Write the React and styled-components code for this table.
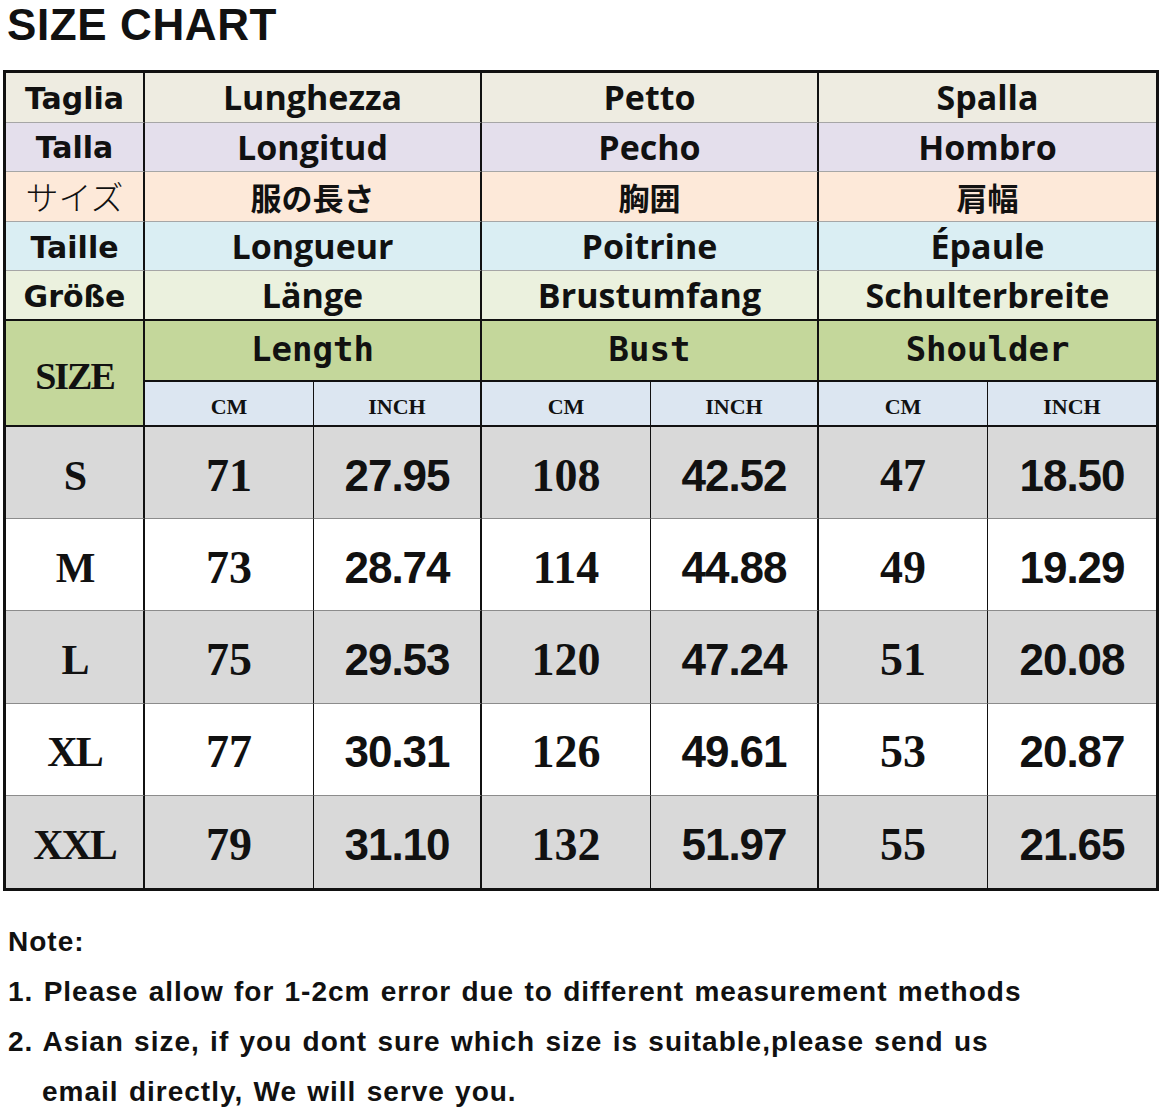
import React from 'react';
import styled, { createGlobalStyle } from 'styled-components';

const GlobalStyle = createGlobalStyle`
  * {
    box-sizing: border-box;
  }

  body {
    margin: 0;
    background: #ffffff;
    color: #111111;
    font-family: "Liberation Sans", Arial, sans-serif;
  }
`;

const Page = styled.div`
  width: 1163px;
  padding-bottom: 6px;
`;

const Title = styled.h1`
  margin: 0;
  padding-left: 7px;
  font-family: "Liberation Sans", Arial, sans-serif;
  font-size: 44px;
  line-height: 50px;
  letter-spacing: 0.6px;
  font-weight: 700;
  color: #111111;
`;

const ChartFrame = styled.div`
  margin: 20px 0 0 3px;
  width: 1156px;
  border: 3px solid #111111;
`;

const Table = styled.table`
  width: 100%;
  border-collapse: separate;
  border-spacing: 0;
  table-layout: fixed;
`;

const Cell = styled.td`
  padding: 0;
  text-align: center;
  vertical-align: middle;
  color: #111111;
  background: ${(p) => p.$bg || 'transparent'};
  border-right: ${(p) => (p.$last ? 'none' : p.$thin ? '1px solid #111' : '2px solid #111')};
  border-bottom: ${(p) => p.$bottom || 'none'};
  white-space: nowrap;
`;

const LangCell = styled(Cell)`
  height: 49.6px;
  font-family: ${(p) =>
    p.$first ? '"DejaVu Sans", sans-serif' : '"Open Sans", sans-serif'};
  font-size: ${(p) => (p.$first ? '30px' : '34px')};
  font-weight: 700;
  line-height: 1;
  padding-top: ${(p) => (p.$first ? '3px' : '0')};
`;

const JapaneseCell = styled(LangCell)`
  font-family: "Noto Sans CJK JP", sans-serif;
  font-size: ${(p) => (p.$first ? '33px' : '31px')};
  font-weight: ${(p) => (p.$first ? 300 : 700)};
  padding-top: 0;
`;

const SizeHead = styled(Cell)`
  font-family: "Liberation Serif", "Times New Roman", serif;
  font-size: 38px;
  font-weight: 700;
  letter-spacing: -2px;
  padding-top: 6px;
`;

const GroupHead = styled(Cell)`
  height: 61px;
  font-family: "DejaVu Sans Mono", "Liberation Mono", monospace;
  font-size: 34px;
  font-weight: 700;
  padding-bottom: 2px;
`;

const UnitHead = styled(Cell)`
  height: 45px;
  font-family: "Liberation Serif", "Times New Roman", serif;
  font-size: 22px;
  font-weight: 700;
  padding-top: 8px;
`;

const DataCell = styled(Cell)`
  height: 92.2px;
  font-weight: 700;
  line-height: 1;
  padding-top: 6px;
  font-family: ${(p) =>
    p.$kind === 'inch'
      ? '"Liberation Sans", Arial, sans-serif'
      : '"Liberation Serif", "Times New Roman", serif'};
  font-size: ${(p) => (p.$kind === 'inch' ? '44px' : p.$kind === 'size' ? '42px' : '46px')};
  letter-spacing: ${(p) => (p.$kind === 'inch' ? '-1px' : p.$kind === 'size' ? '-2px' : '0')};
`;

const Notes = styled.div`
  margin-top: 26px;
  padding-left: 8px;
  font-family: "Liberation Sans", Arial, sans-serif;
  font-size: 28px;
  font-weight: 700;
  letter-spacing: 1px;
  word-spacing: 1.5px;
  line-height: 50px;
  color: #111111;
`;

const NoteLine = styled.div`
  padding-left: ${(p) => (p.$indent ? '34px' : '0')};
  white-space: nowrap;
`;

const LANG_ROWS = [
  { bg: '#eeece1', label: 'Taglia', cols: ['Lunghezza', 'Petto', 'Spalla'] },
  { bg: '#e4dfec', label: 'Talla', cols: ['Longitud', 'Pecho', 'Hombro'] },
  { bg: '#fde9d9', label: 'サイズ', cols: ['服の長さ', '胸囲', '肩幅'], jp: true },
  { bg: '#daeef3', label: 'Taille', cols: ['Longueur', 'Poitrine', 'Épaule'] },
  { bg: '#ebf1de', label: 'Größe', cols: ['Länge', 'Brustumfang', 'Schulterbreite'] },
];

const SIZES = [
  { size: 'S', values: ['71', '27.95', '108', '42.52', '47', '18.50'] },
  { size: 'M', values: ['73', '28.74', '114', '44.88', '49', '19.29'] },
  { size: 'L', values: ['75', '29.53', '120', '47.24', '51', '20.08'] },
  { size: 'XL', values: ['77', '30.31', '126', '49.61', '53', '20.87'] },
  { size: 'XXL', values: ['79', '31.10', '132', '51.97', '55', '21.65'] },
];

const GREEN = '#c4d79b';
const BLUE = '#dce6f1';
const GREY_LINE = '1px solid #a6a6a6';
const BLACK_LINE = '2px solid #111';

const App = () => {
  return (
    <Page>
      <GlobalStyle />
      <Title>SIZE CHART</Title>

      <ChartFrame>
        <Table>
          <colgroup>
            <col style={{ width: 139 }} />
            <col style={{ width: 169 }} />
            <col style={{ width: 168 }} />
            <col style={{ width: 169 }} />
            <col style={{ width: 168 }} />
            <col style={{ width: 169 }} />
            <col />
          </colgroup>
          <tbody>
            {LANG_ROWS.map((row, i) => {
              const isLast = i === LANG_ROWS.length - 1;
              const bottom = isLast ? BLACK_LINE : GREY_LINE;
              const C = row.jp ? JapaneseCell : LangCell;
              return (
                <tr key={row.label}>
                  <C $first $bg={row.bg} $bottom={bottom}>
                    {row.label}
                  </C>
                  {row.cols.map((text, j) => (
                    <C key={text} colSpan={2} $bg={row.bg} $bottom={bottom} $last={j === 2}>
                      {text}
                    </C>
                  ))}
                </tr>
              );
            })}

            <tr>
              <SizeHead rowSpan={2} $bg={GREEN} $bottom={BLACK_LINE}>
                SIZE
              </SizeHead>
              {['Length', 'Bust', 'Shoulder'].map((text, j) => (
                <GroupHead key={text} colSpan={2} $bg={GREEN} $bottom={BLACK_LINE} $last={j === 2}>
                  {text}
                </GroupHead>
              ))}
            </tr>
            <tr>
              {[0, 1, 2].flatMap((j) => [
                <UnitHead key={`cm${j}`} $thin $bg={BLUE} $bottom={BLACK_LINE}>
                  CM
                </UnitHead>,
                <UnitHead key={`in${j}`} $bg={BLUE} $bottom={BLACK_LINE} $last={j === 2}>
                  INCH
                </UnitHead>,
              ])}
            </tr>

            {SIZES.map((row, i) => {
              const bg = i % 2 === 0 ? '#d9d9d9' : '#ffffff';
              const bottom = i === SIZES.length - 1 ? 'none' : '1px solid #8c8c8c';
              return (
                <tr key={row.size}>
                  <DataCell $kind="size" $bg={bg} $bottom={bottom}>
                    {row.size}
                  </DataCell>
                  {row.values.map((v, j) => (
                    <DataCell
                      key={j}
                      $kind={j % 2 === 0 ? 'cm' : 'inch'}
                      $thin={j % 2 === 0}
                      $last={j === 5}
                      $bg={bg}
                      $bottom={bottom}
                    >
                      {v}
                    </DataCell>
                  ))}
                </tr>
              );
            })}
          </tbody>
        </Table>
      </ChartFrame>

      <Notes>
        <NoteLine>Note:</NoteLine>
        <NoteLine>1. Please allow for 1-2cm error due to different measurement methods</NoteLine>
        <NoteLine>2. Asian size, if you dont sure which size is suitable,please send us</NoteLine>
        <NoteLine $indent>email directly, We will serve you.</NoteLine>
      </Notes>
    </Page>
  );
};

export default App;
